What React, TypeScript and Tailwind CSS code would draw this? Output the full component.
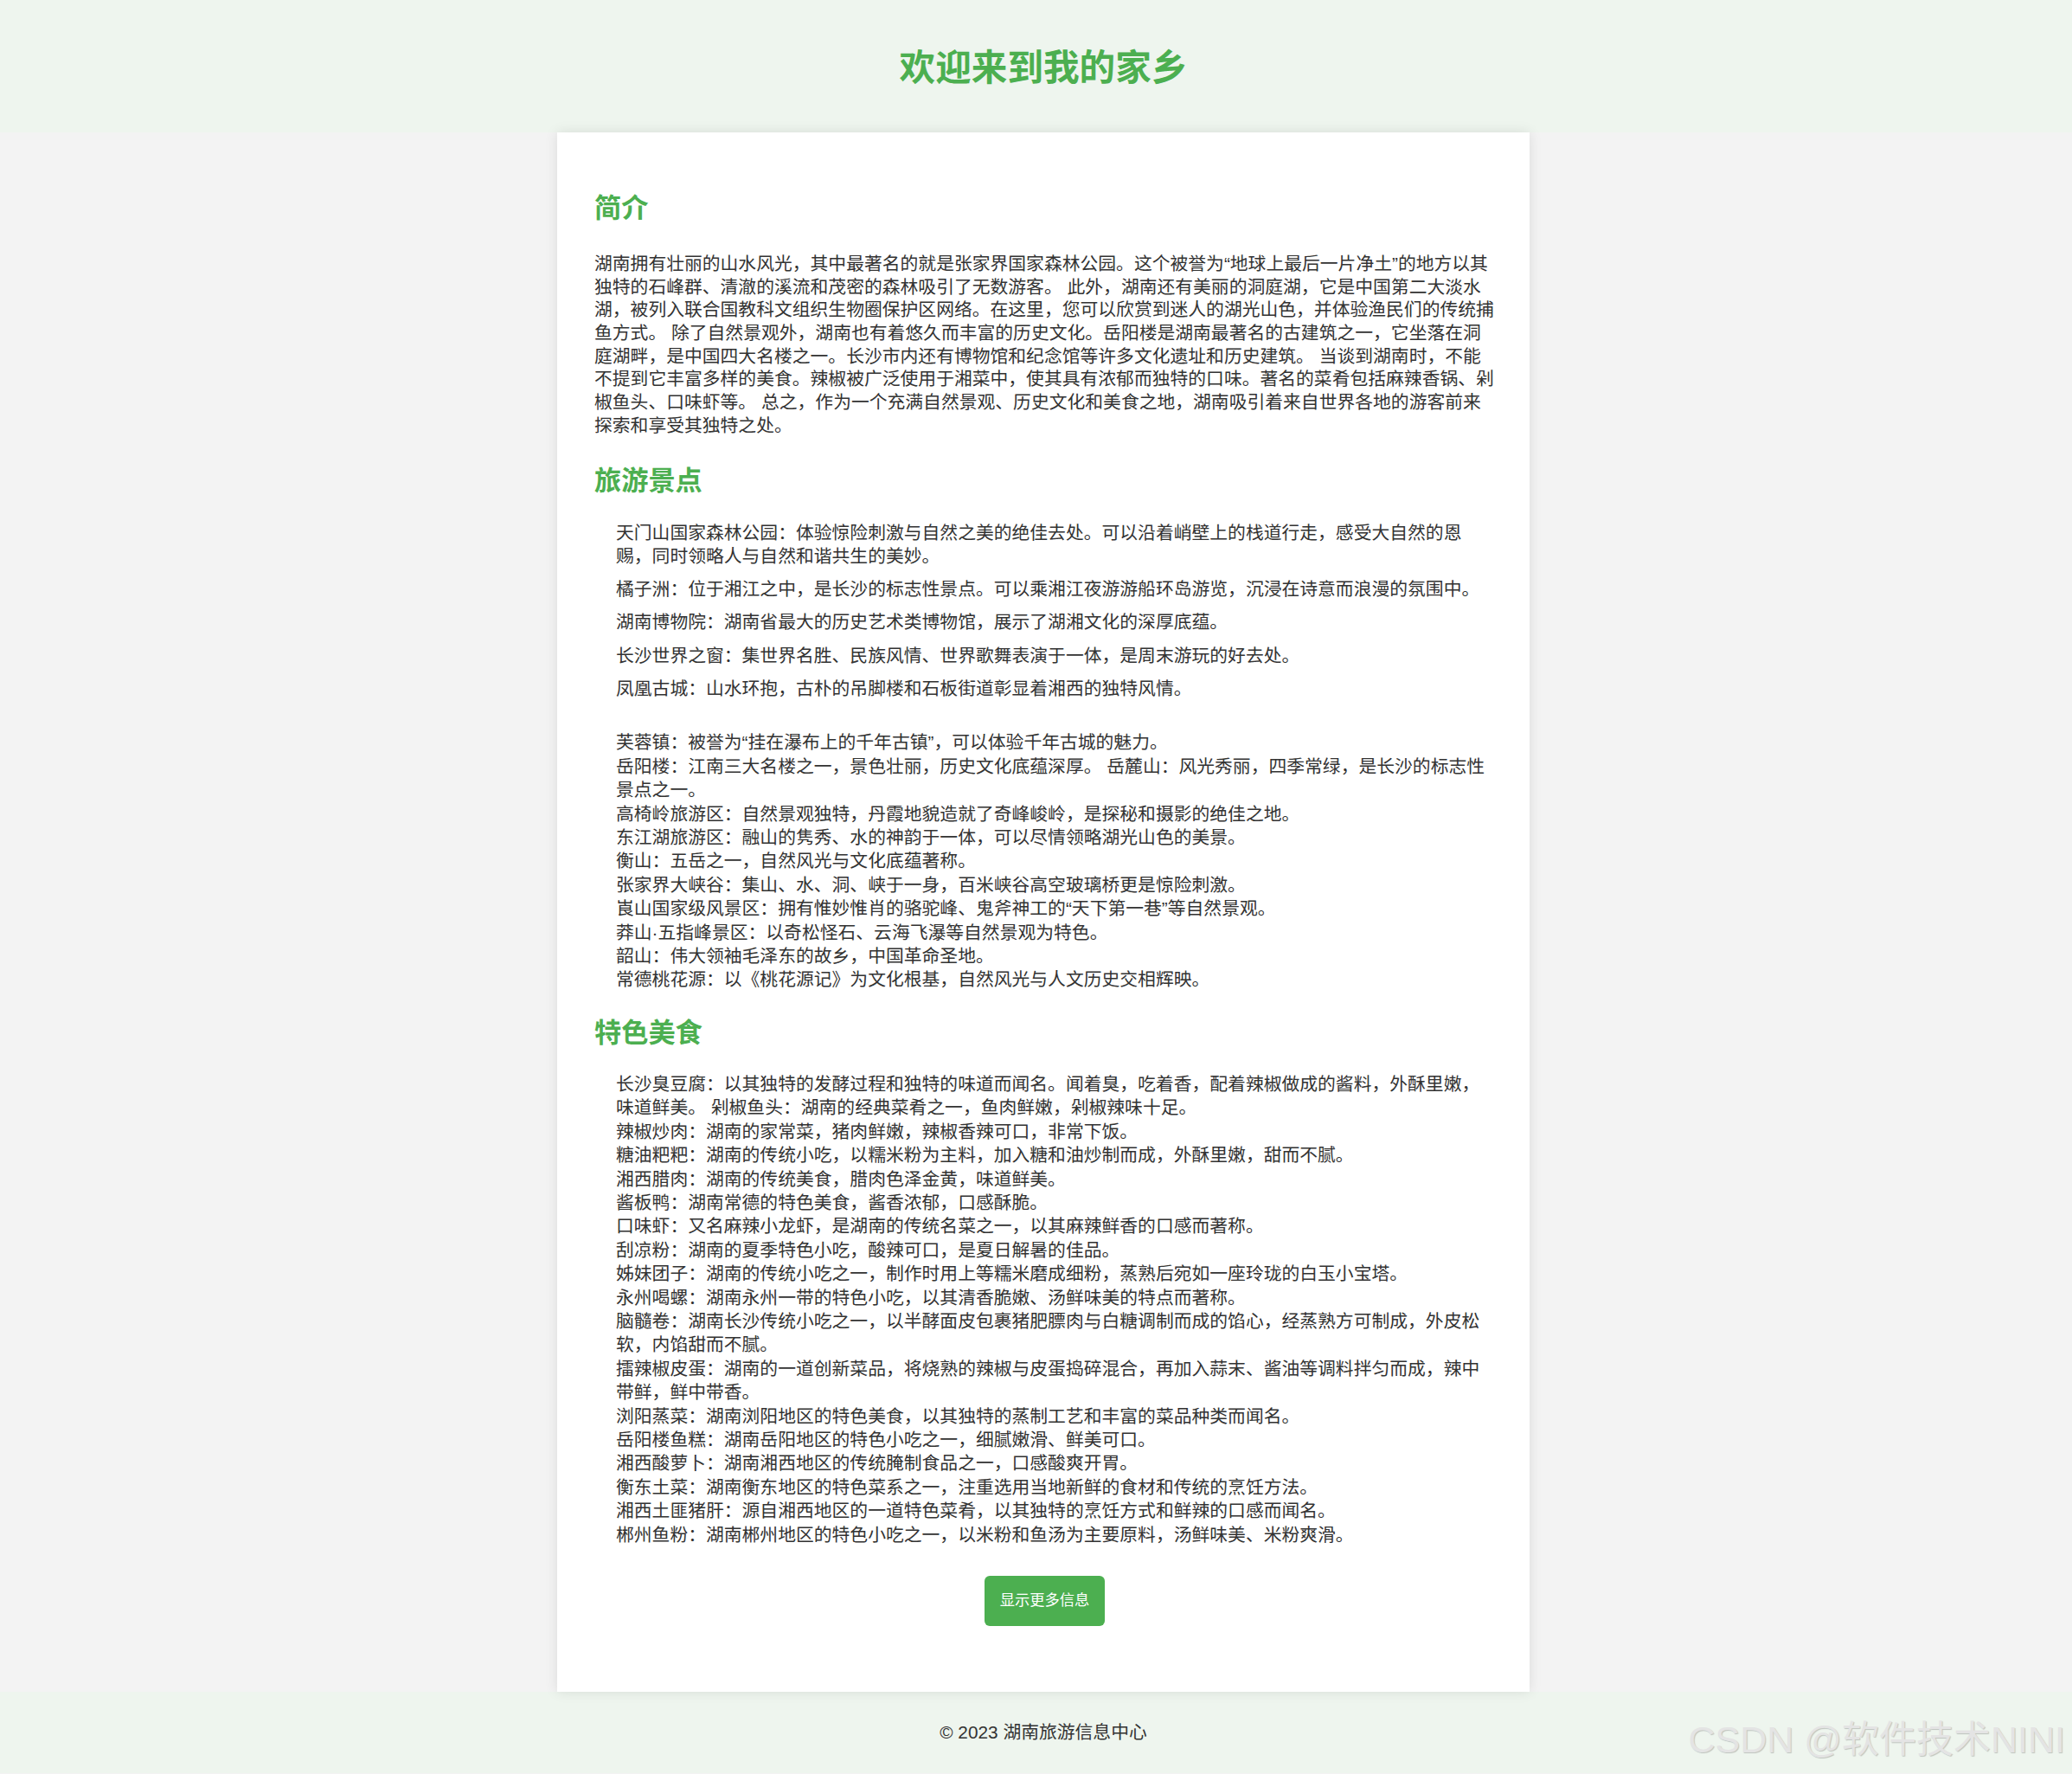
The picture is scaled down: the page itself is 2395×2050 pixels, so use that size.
import type { FC } from "react";

const intro =
  "湖南拥有壮丽的山水风光，其中最著名的就是张家界国家森林公园。这个被誉为“地球上最后一片净土”的地方以其独特的石峰群、清澈的溪流和茂密的森林吸引了无数游客。 此外，湖南还有美丽的洞庭湖，它是中国第二大淡水湖，被列入联合国教科文组织生物圈保护区网络。在这里，您可以欣赏到迷人的湖光山色，并体验渔民们的传统捕鱼方式。 除了自然景观外，湖南也有着悠久而丰富的历史文化。岳阳楼是湖南最著名的古建筑之一，它坐落在洞庭湖畔，是中国四大名楼之一。长沙市内还有博物馆和纪念馆等许多文化遗址和历史建筑。 当谈到湖南时，不能不提到它丰富多样的美食。辣椒被广泛使用于湘菜中，使其具有浓郁而独特的口味。著名的菜肴包括麻辣香锅、剁椒鱼头、口味虾等。 总之，作为一个充满自然景观、历史文化和美食之地，湖南吸引着来自世界各地的游客前来探索和享受其独特之处。";

const spots = [
  "天门山国家森林公园：体验惊险刺激与自然之美的绝佳去处。可以沿着峭壁上的栈道行走，感受大自然的恩赐，同时领略人与自然和谐共生的美妙。",
  "橘子洲：位于湘江之中，是长沙的标志性景点。可以乘湘江夜游游船环岛游览，沉浸在诗意而浪漫的氛围中。",
  "湖南博物院：湖南省最大的历史艺术类博物馆，展示了湖湘文化的深厚底蕴。",
  "长沙世界之窗：集世界名胜、民族风情、世界歌舞表演于一体，是周末游玩的好去处。",
  "凤凰古城：山水环抱，古朴的吊脚楼和石板街道彰显着湘西的独特风情。",
];

const moreSpots = [
  "芙蓉镇：被誉为“挂在瀑布上的千年古镇”，可以体验千年古城的魅力。",
  "岳阳楼：江南三大名楼之一，景色壮丽，历史文化底蕴深厚。 岳麓山：风光秀丽，四季常绿，是长沙的标志性景点之一。",
  "高椅岭旅游区：自然景观独特，丹霞地貌造就了奇峰峻岭，是探秘和摄影的绝佳之地。",
  "东江湖旅游区：融山的隽秀、水的神韵于一体，可以尽情领略湖光山色的美景。",
  "衡山：五岳之一，自然风光与文化底蕴著称。",
  "张家界大峡谷：集山、水、洞、峡于一身，百米峡谷高空玻璃桥更是惊险刺激。",
  "崀山国家级风景区：拥有惟妙惟肖的骆驼峰、鬼斧神工的“天下第一巷”等自然景观。",
  "莽山·五指峰景区：以奇松怪石、云海飞瀑等自然景观为特色。",
  "韶山：伟大领袖毛泽东的故乡，中国革命圣地。",
  "常德桃花源：以《桃花源记》为文化根基，自然风光与人文历史交相辉映。",
];

const foods = [
  "长沙臭豆腐：以其独特的发酵过程和独特的味道而闻名。闻着臭，吃着香，配着辣椒做成的酱料，外酥里嫩，味道鲜美。 剁椒鱼头：湖南的经典菜肴之一，鱼肉鲜嫩，剁椒辣味十足。",
  "辣椒炒肉：湖南的家常菜，猪肉鲜嫩，辣椒香辣可口，非常下饭。",
  "糖油粑粑：湖南的传统小吃，以糯米粉为主料，加入糖和油炒制而成，外酥里嫩，甜而不腻。",
  "湘西腊肉：湖南的传统美食，腊肉色泽金黄，味道鲜美。",
  "酱板鸭：湖南常德的特色美食，酱香浓郁，口感酥脆。",
  "口味虾：又名麻辣小龙虾，是湖南的传统名菜之一，以其麻辣鲜香的口感而著称。",
  "刮凉粉：湖南的夏季特色小吃，酸辣可口，是夏日解暑的佳品。",
  "姊妹团子：湖南的传统小吃之一，制作时用上等糯米磨成细粉，蒸熟后宛如一座玲珑的白玉小宝塔。",
  "永州喝螺：湖南永州一带的特色小吃，以其清香脆嫩、汤鲜味美的特点而著称。",
  "脑髓卷：湖南长沙传统小吃之一，以半酵面皮包裹猪肥膘肉与白糖调制而成的馅心，经蒸熟方可制成，外皮松软，内馅甜而不腻。",
  "擂辣椒皮蛋：湖南的一道创新菜品，将烧熟的辣椒与皮蛋捣碎混合，再加入蒜末、酱油等调料拌匀而成，辣中带鲜，鲜中带香。",
  "浏阳蒸菜：湖南浏阳地区的特色美食，以其独特的蒸制工艺和丰富的菜品种类而闻名。",
  "岳阳楼鱼糕：湖南岳阳地区的特色小吃之一，细腻嫩滑、鲜美可口。",
  "湘西酸萝卜：湖南湘西地区的传统腌制食品之一，口感酸爽开胃。",
  "衡东土菜：湖南衡东地区的特色菜系之一，注重选用当地新鲜的食材和传统的烹饪方法。",
  "湘西土匪猪肝：源自湘西地区的一道特色菜肴，以其独特的烹饪方式和鲜辣的口感而闻名。",
  "郴州鱼粉：湖南郴州地区的特色小吃之一，以米粉和鱼汤为主要原料，汤鲜味美、米粉爽滑。",
];

const Heading: FC<{ text: string; className?: string }> = ({ text, className }) => (
  <h2 className={`text-[31.2px] leading-[42px] font-bold text-[#4caf50] ${className ?? ""}`}>{text}</h2>
);

export default function App() {
  return (
    <div className="relative min-h-screen overflow-hidden bg-[#f3f3f3] text-[#333] font-['Liberation_Sans','Noto_Sans_CJK_SC',sans-serif]">
      {/* the page in the shot is centred a bit right of the window middle */}
      <header className="h-[153px] pl-[17px] bg-[#eef5ee] flex items-center justify-center">
        <h1 className="text-[41.6px] leading-none font-bold text-[#4caf50] mt-[4px]">欢迎来到我的家乡</h1>
      </header>

      <div className="pl-[17px]">
        <main className="relative z-10 w-[1124px] mx-auto bg-white shadow-[0_0_14px_rgba(0,0,0,0.1)] pl-[43px] pr-[40px] pt-[67px] pb-[76px]">
          <Heading text="简介" />
          <p className="mt-[30px] text-[20.8px] leading-[26.67px]">{intro}</p>

          <Heading text="旅游景点" className="mt-[30px]" />
          <ul className="mt-[26px] pl-[25px] text-[20.8px] leading-[26.67px] flex flex-col gap-[11.5px]">
            {spots.map((s) => (
              <li key={s}>{s}</li>
            ))}
          </ul>
          <div className="mt-[35px] pl-[25px] text-[20.8px] leading-[27.4px]">
            {moreSpots.map((s) => (
              <div key={s}>{s}</div>
            ))}
          </div>

          <Heading text="特色美食" className="mt-[27px]" />
          <div className="mt-[24px] pl-[25px] text-[20.8px] leading-[27.4px]">
            {foods.map((s) => (
              <div key={s}>{s}</div>
            ))}
          </div>

          <div className="mt-[34px] flex justify-center">
            <button
              type="button"
              className="w-[139px] h-[58px] rounded-[6px] bg-[#4caf50] text-white text-[17.3px] cursor-pointer"
            >
              显示更多信息
            </button>
          </div>
        </main>
      </div>

      <footer className="h-[94px] pl-[17px] bg-[#eef5ee] flex items-center justify-center text-[20.8px] text-[#333]">
        © 2023 湖南旅游信息中心
      </footer>

      <div className="absolute right-[8px] bottom-[18px] text-[43px] leading-none text-[#e4e4e4] [text-shadow:1px_1px_1px_rgba(0,0,0,0.2)] pointer-events-none select-none">
        CSDN @软件技术NINI
      </div>
    </div>
  );
}
